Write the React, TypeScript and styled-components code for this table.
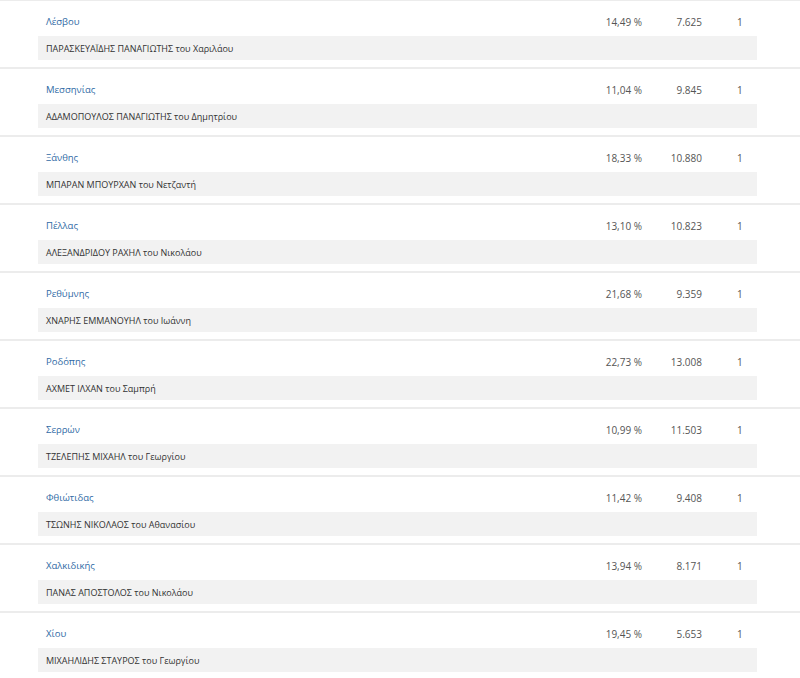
import React from "react";
import styled, { createGlobalStyle } from "styled-components";

const Global = createGlobalStyle`
  html, body { margin: 0; padding: 0; background: #fff; }
  body { font-family: "Open Sans", "Noto Sans", sans-serif; }
`;

const List = styled.div`
  width: 800px;
  border-top: 1px solid #ececec;
`;

const Row = styled.div`
  height: 66px;
  border-bottom: 2px solid #ececec;
  padding: 0 43px 0 38px;
  display: flex;
  flex-direction: column;
`;

const Header = styled.div`
  display: grid;
  grid-template-columns: 1fr auto 60px 55px;
  align-items: start;
  height: 35px;
  box-sizing: border-box;
  padding: 14px 0 0 8px;
  font-size: 10px;
  line-height: 14px;
`;

const Province = styled.span`
  color: #2f6aa5;
  font-size: 9.5px;
`;

const Num = styled.span`
  color: #555;
  text-align: right;
`;

const Seats = styled.span`
  color: #555;
  padding-left: 35px;
`;

const NameBand = styled.div`
  height: 24px;
  background: #f2f2f2;
  display: flex;
  align-items: center;
  padding-left: 8px;
  font-size: 9px;
  color: #333;
`;

const rows = [
  ["Λέσβου", "14,49 %", "7.625", "1", "ΠΑΡΑΣΚΕΥΑΪΔΗΣ ΠΑΝΑΓΙΩΤΗΣ του Χαριλάου"],
  ["Μεσσηνίας", "11,04 %", "9.845", "1", "ΑΔΑΜΟΠΟΥΛΟΣ ΠΑΝΑΓΙΩΤΗΣ του Δημητρίου"],
  ["Ξάνθης", "18,33 %", "10.880", "1", "ΜΠΑΡΑΝ ΜΠΟΥΡΧΑΝ του Νετζαντή"],
  ["Πέλλας", "13,10 %", "10.823", "1", "ΑΛΕΞΑΝΔΡΙΔΟΥ ΡΑΧΗΛ του Νικολάου"],
  ["Ρεθύμνης", "21,68 %", "9.359", "1", "ΧΝΑΡΗΣ ΕΜΜΑΝΟΥΗΛ του Ιωάννη"],
  ["Ροδόπης", "22,73 %", "13.008", "1", "ΑΧΜΕΤ ΙΛΧΑΝ του Σαμπρή"],
  ["Σερρών", "10,99 %", "11.503", "1", "ΤΖΕΛΕΠΗΣ ΜΙΧΑΗΛ του Γεωργίου"],
  ["Φθιώτιδας", "11,42 %", "9.408", "1", "ΤΣΩΝΗΣ ΝΙΚΟΛΑΟΣ του Αθανασίου"],
  ["Χαλκιδικής", "13,94 %", "8.171", "1", "ΠΑΝΑΣ ΑΠΟΣΤΟΛΟΣ του Νικολάου"],
  ["Χίου", "19,45 %", "5.653", "1", "ΜΙΧΑΗΛΙΔΗΣ ΣΤΑΥΡΟΣ του Γεωργίου"],
];

export default function App() {
  return (
    <>
      <Global />
      <List>
        {rows.map(([p, pct, votes, seats, name]) => (
          <Row key={p}>
            <Header>
              <Province>{p}</Province>
              <Num>{pct}</Num>
              <Num>{votes}</Num>
              <Seats>{seats}</Seats>
            </Header>
            <NameBand>{name}</NameBand>
          </Row>
        ))}
      </List>
    </>
  );
}
